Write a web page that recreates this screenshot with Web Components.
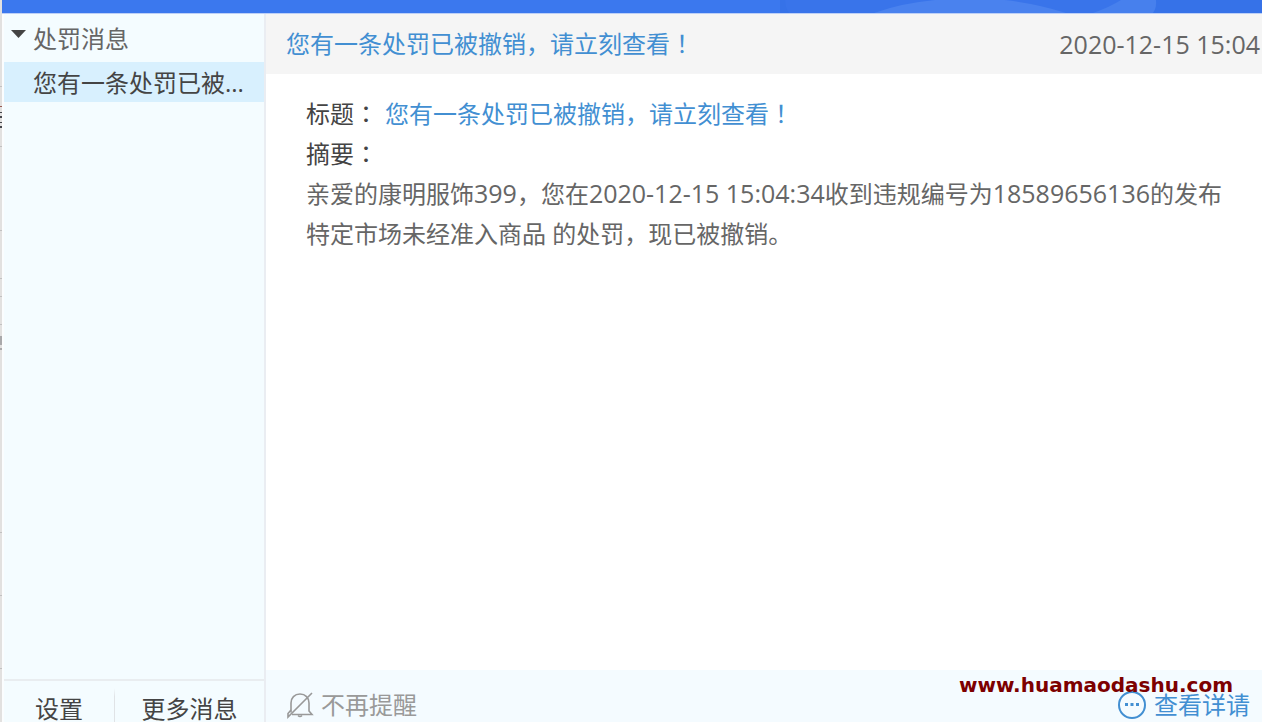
<!DOCTYPE html>
<html lang="zh-CN">
<head>
<meta charset="utf-8">
<meta name="viewport" content="width=device-width, initial-scale=1">
<title>处罚消息</title>
<style>
    body {
        margin: 0;
        height: 100vh;
        overflow: hidden;
        background: #fff;
        color: #666;
        font-family: "Open Sans", "Noto Sans CJK SC", sans-serif;
        font-size: 24px;
        line-height: 40px;
    }
    .num {
        font-size: 25px;
        line-height: 24px;
    }
    /* centred full-width punctuation */
    .mark {
        font-family: "Noto Sans CJK TC", sans-serif;
        line-height: 24px;
    }
</style>
</head>
<body>
<message-window>
    <message-banner slot="banner"></message-banner>
    <message-sidebar slot="sidebar">
        <message-group label="处罚消息">
            <message-item>您有一条处罚已被...</message-item>
        </message-group>
        <text-button slot="footer">设置</text-button>
        <text-button slot="footer">更多消息</text-button>
    </message-sidebar>
    <message-detail>
        <span slot="title">您有一条处罚已被撤销，请立刻查看<span class="mark" lang="zh-Hant">！</span></span>
        <time slot="time" class="num" datetime="2020-12-15T15:04">2020-12-15 15:04</time>
        <message-field>
            <span slot="label">标题<span class="mark" lang="zh-Hant">：</span></span>
            <message-link>您有一条处罚已被撤销，请立刻查看<span class="mark" lang="zh-Hant">！</span></message-link>
        </message-field>
        <message-field>
            <span slot="label">摘要<span class="mark" lang="zh-Hant">：</span></span>
        </message-field>
        <span>亲爱的康明服饰<span class="num">399</span>，您在<span class="num">2020-12-15 15:04:34</span>收到违规编号为<span class="num">18589656136</span>的发布特定市场未经准入商品 的处罚，现已被撤销。</span>
        <mute-button slot="footer">不再提醒</mute-button>
        <message-link slot="footer" icon>查看详请</message-link>
    </message-detail>
    <site-mark slot="mark">www.huamaodashu.com</site-mark>
</message-window>

<script>
class BaseElement extends HTMLElement {
    connectedCallback() {
        if (this.shadowRoot) {
            return;
        }
        this.attachShadow({ mode: "open" });
        this.shadowRoot.innerHTML = this.template();
    }
}

class MessageWindow extends BaseElement {
    template() {
        return `
            <style>
                :host {
                    display: grid;
                    grid-template-columns: 2px 1fr;
                    position: relative;
                    height: 100vh;
                    overflow: hidden;
                }
                .edge {
                    width: 2px;
                    height: 722px;
                    background: #e2e1e0;
                }
                .frame {
                    display: flex;
                    flex-direction: column;
                    min-width: 0;
                    /* the footers run on below the fold */
                    min-height: calc(100vh + 18px);
                }
                .columns {
                    flex: 1;
                    display: grid;
                    grid-template-columns: 264px 1fr;
                }
            </style>
            <svg class="edge" viewBox="0 0 2 722" aria-hidden="true">
                <path d="M0 106h2v1H0z" fill="#9a5a52"/>
                <path d="M0 112h2v1H0zM0 116h2v2H0zM0 122h2v1H0zM0 126h2v2H0z" fill="#44474c"/>
                <path d="M0 86h2v1H0zM0 146h2v1H0zM0 230h2v1H0zM0 278h2v1H0zM0 296h2v1H0zM0 324h2v1H0zM0 532h2v1H0zM0 595h2v1H0zM0 668h2v1H0z" fill="#c2c1c1"/>
                <path d="M0 336h2v9H0zM0 348h2v2H0z" fill="#a9a9ab"/>
            </svg>
            <div class="frame">
                <slot name="banner"></slot>
                <div class="columns">
                    <slot name="sidebar"></slot>
                    <slot></slot>
                </div>
            </div>
            <slot name="mark"></slot>
        `;
    }
}

class MessageBanner extends BaseElement {
    template() {
        return `
            <style>
                :host {
                    display: flex;
                    justify-content: flex-end;
                    height: 13px;
                    background: #3b78ee;
                    border-bottom: 1px solid #bdd0f7;
                }
                svg {
                    width: 482px;
                    height: 13px;
                }
            </style>
            <svg viewBox="0 0 482 13" aria-hidden="true">
                <path d="M0 0H482V13H0z" fill="#3672e8"/>
                <path d="M0 0H376Q376 8 372 13H9Q5 7 5 0z" fill="#3974ea"/>
                <path d="M94 13Q122 3 155 0H225Q258 4 286 13z" fill="#4a82ee"/>
                <path d="M313 13Q330 7 341 0H376Q377 7 373 13z" fill="#4780ed"/>
            </svg>
        `;
    }
}

class MessageSidebar extends BaseElement {
    template() {
        return `
            <style>
                :host {
                    display: flex;
                    flex-direction: column;
                    box-sizing: border-box;
                    border-left: 2px solid #fbfdfe;
                    border-right: 2px solid #eaedf2;
                    background: #f4fcff;
                }
                nav {
                    flex: 1;
                }
                footer {
                    display: grid;
                    grid-template-columns: 110px 1fr;
                    height: 56px;
                    padding-bottom: 3px;
                    border-top: 2px solid #e9edf0;
                    color: #444;
                }
                ::slotted(text-button:last-child) {
                    border-left: 1px solid;
                    border-image: linear-gradient(#f4fcff 8px, #e0e3e6 16px) 1;
                }
            </style>
            <nav><slot></slot></nav>
            <footer><slot name="footer"></slot></footer>
        `;
    }
}

class MessageGroup extends BaseElement {
    template() {
        return `
            <style>
                :host {
                    display: block;
                }
                summary {
                    display: flex;
                    gap: 7px;
                    height: 43px;
                    padding: 5px 7px 0 7px;
                    line-height: 40px;
                    list-style: none;
                    cursor: pointer;
                }
                svg {
                    width: 15px;
                    height: 9px;
                    margin-top: 11px;
                }
                details:not([open]) svg {
                    transform: rotate(-90deg);
                }
            </style>
            <details open>
                <summary>
                    <svg viewBox="0 0 15 9" aria-hidden="true"><path d="M0 0H15L7.500 8z" fill="#444"/></svg>
                    <span>${this.getAttribute("label")}</span>
                </summary>
                <slot></slot>
            </details>
        `;
    }
}

class MessageItem extends BaseElement {
    template() {
        return `
            <style>
                :host {
                    display: block;
                }
                button {
                    display: block;
                    width: 100%;
                    height: 40px;
                    padding: 2px 0 0 29px;
                    border: 0;
                    background: #d8f0fe;
                    color: #444;
                    font: inherit;
                    line-height: 36px;
                    text-align: left;
                    white-space: nowrap;
                    cursor: pointer;
                }
            </style>
            <button type="button"><slot></slot></button>
        `;
    }
}

class TextButton extends BaseElement {
    template() {
        return `
            <style>
                :host {
                    display: flex;
                    align-items: center;
                    justify-content: center;
                }
                button {
                    padding: 0;
                    border: 0;
                    background: none;
                    color: inherit;
                    font: inherit;
                    line-height: 24px;
                    cursor: pointer;
                }
            </style>
            <button type="button"><slot></slot></button>
        `;
    }
}

class MessageDetail extends BaseElement {
    template() {
        return `
            <style>
                :host {
                    display: flex;
                    flex-direction: column;
                    min-width: 0;
                    background: #fff;
                }
                header {
                    display: flex;
                    align-items: center;
                    justify-content: space-between;
                    height: 60px;
                    padding: 0 2px 0 20px;
                    background: #f5f5f5;
                }
                h1 {
                    margin: 0;
                    color: #428fd2;
                    font: inherit;
                }
                article {
                    flex: 1;
                    padding: 20px 24px 20px 40px;
                }
                footer {
                    display: flex;
                    align-items: center;
                    justify-content: space-between;
                    height: 70px;
                    padding: 0 12px 0 20px;
                    background: #f4fbff;
                }
            </style>
            <header>
                <h1><slot name="title"></slot></h1>
                <slot name="time"></slot>
            </header>
            <article><slot></slot></article>
            <footer><slot name="footer"></slot></footer>
        `;
    }
}

class MessageField extends BaseElement {
    template() {
        return `
            <style>
                :host {
                    display: flex;
                    gap: 7px;
                    height: 40px;
                }
                .label {
                    color: #444;
                }
            </style>
            <span class="label"><slot name="label"></slot></span>
            <slot></slot>
        `;
    }
}

class MessageLink extends BaseElement {
    template() {
        const icon = `
            <svg viewBox="0 0 30 30" aria-hidden="true">
                <circle cx="15" cy="15" r="13" fill="none" stroke="#428fd2" stroke-width="2"/>
                <path d="M8 13h3v3H8zM13.500 13h3v3h-3zM19 13h3v3h-3z" fill="#428fd2"/>
            </svg>
        `;
        return `
            <style>
                :host {
                    display: inline-flex;
                }
                a {
                    display: flex;
                    align-items: center;
                    gap: 7px;
                    color: #428fd2;
                    text-decoration: none;
                }
                svg {
                    width: 30px;
                    height: 30px;
                }
            </style>
            <a href="#">${this.hasAttribute("icon") ? icon : ""}<span><slot></slot></span></a>
        `;
    }
}

class MuteButton extends BaseElement {
    template() {
        return `
            <style>
                :host {
                    display: block;
                }
                button {
                    display: flex;
                    align-items: center;
                    gap: 7px;
                    padding: 0;
                    border: 0;
                    background: none;
                    color: #999;
                    font: inherit;
                    cursor: pointer;
                }
                svg {
                    width: 28px;
                    height: 28px;
                }
            </style>
            <button type="button">
                <svg viewBox="0 0 28 28" fill="none" stroke="#999" stroke-width="1.600" aria-hidden="true">
                    <path d="M5 21.500V12C5 7 8.500 3 14 3s9 4 9 9v8l3 3.500H6"/>
                    <path d="M12 24.500q2 2 4 0"/>
                    <path d="M5 19L2 22.500V26L26 2"/>
                </svg>
                <span><slot></slot></span>
            </button>
        `;
    }
}

class SiteMark extends BaseElement {
    template() {
        return `
            <style>
                :host {
                    position: absolute;
                    right: 29px;
                    bottom: 25px;
                    color: #7d0000;
                    font: bold 20px/24px "DejaVu Sans", sans-serif;
                    pointer-events: none;
                }
            </style>
            <slot></slot>
        `;
    }
}

customElements.define("message-window", MessageWindow);
customElements.define("message-banner", MessageBanner);
customElements.define("message-sidebar", MessageSidebar);
customElements.define("message-group", MessageGroup);
customElements.define("message-item", MessageItem);
customElements.define("text-button", TextButton);
customElements.define("message-detail", MessageDetail);
customElements.define("message-field", MessageField);
customElements.define("message-link", MessageLink);
customElements.define("mute-button", MuteButton);
customElements.define("site-mark", SiteMark);
</script>
</body>
</html>
